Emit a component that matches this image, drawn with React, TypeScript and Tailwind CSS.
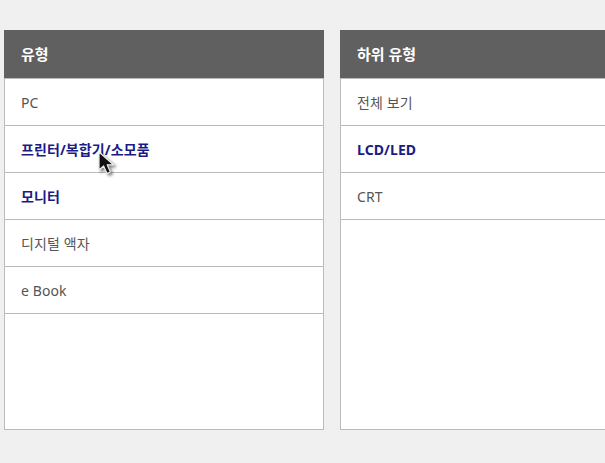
import React from "react";

type Item = { label: string; active?: boolean };

const types: Item[] = [
  { label: "PC" },
  { label: "프린터/복합기/소모품", active: true },
  { label: "모니터", active: true },
  { label: "디지털 액자" },
  { label: "e Book" },
];

const subTypes: Item[] = [
  { label: "전체 보기" },
  { label: "LCD/LED", active: true },
  { label: "CRT" },
];

function Panel({ title, items }: { title: string; items: Item[] }) {
  return (
    <div className="w-[320px] h-[400px] shrink-0 bg-white border-x border-b border-[#bbbbbb] flex flex-col">
      <div className="h-12 -mx-px bg-[#606060] flex items-center pl-[17px] text-white font-bold text-[15px]">
        {title}
      </div>
      <ul className="border-t border-[#bbbbbb]">
        {items.map((it) => (
          <li
            key={it.label}
            className={`h-[47px] border-b border-[#bbbbbb] flex items-center pl-4 text-[14px] tracking-[0.1px] ${
              it.active ? "font-bold text-[#1b1b86]" : "text-[#555555]"
            }`}
          >
            {it.label}
          </li>
        ))}
      </ul>
    </div>
  );
}

// mouse pointer caught in the screenshot
function Cursor() {
  return (
    <svg
      className="absolute left-[96px] top-[150px]"
      width="28"
      height="28"
      viewBox="0 0 28 28"
      style={{ filter: "drop-shadow(2px 2px 1.5px rgba(0,0,0,0.5))" }}
    >
      <path
        d="M3 2 L3 20 L7.6 16 L11 23.5 L14.4 22 L11.2 14.8 L17.5 14.8 Z"
        fill="#111"
        stroke="#eee"
        strokeWidth="1.2"
        strokeLinejoin="round"
      />
    </svg>
  );
}

export default function App() {
  return (
    <div
      className="relative w-[605px] h-[463px] overflow-hidden bg-[#f0f0f0] pt-[30px] pl-1 flex gap-4"
      style={{ fontFamily: '"Noto Sans", "Noto Sans CJK KR", sans-serif' }}
    >
      <Panel title="유형" items={types} />
      <Panel title="하위 유형" items={subTypes} />
      <Cursor />
    </div>
  );
}
